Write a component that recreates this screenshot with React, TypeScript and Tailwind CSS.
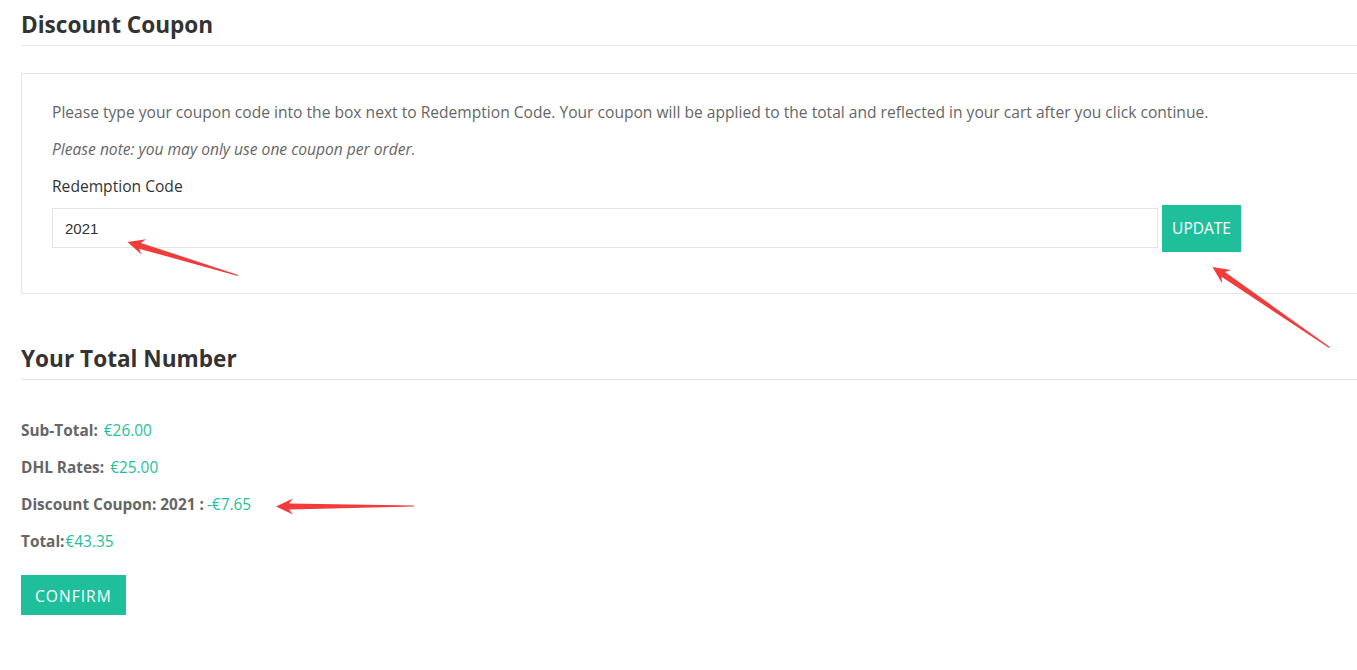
import React from "react";

type Pt = [number, number];

function arrowPoints(tip: Pt, tail: Pt) {
  const dx = tail[0] - tip[0];
  const dy = tail[1] - tip[1];
  const len = Math.hypot(dx, dy);
  const ux = dx / len;
  const uy = dy / len;
  const nx = -uy;
  const ny = ux;
  const h = 17;
  const w = 8;
  const s = 3;
  const p = (a: number, b: number): string => `${tip[0] + ux * a + nx * b},${tip[1] + uy * a + ny * b}`;
  return [
    p(0, 0),
    p(h, w),
    p(h - 4, s),
    p(len, 0.6),
    p(len, -0.6),
    p(h - 4, -s),
    p(h, -w),
  ].join(" ");
}

const arrows: { tip: Pt; tail: Pt }[] = [
  { tip: [127.5, 242], tail: [238, 275.5] },
  { tip: [1212.5, 267], tail: [1329.5, 347.5] },
  { tip: [276, 506.5], tail: [414, 506] },
];

const totals = [
  { label: "Sub-Total:", value: "€26.00", gap: "ml-[6px]" },
  { label: "DHL Rates:", value: "€25.00", gap: "ml-[6px]" },
  { label: "Discount Coupon: 2021 :", value: "-€7.65", gap: "ml-[3px]" },
  { label: "Total:", value: "€43.35", gap: "ml-[1px]" },
];

export default function App() {
  return (
    <div className="relative w-full h-[670px] overflow-hidden bg-white text-[#666] [font-family:'Open_Sans',sans-serif]">
      <div className="w-[1400px] pl-[21px]">
        <h2 className="mt-[10px] pb-[5px] border-b border-[#e5e5e5] text-[22.6px] leading-[30px] font-bold text-[#333]">
          Discount Coupon
        </h2>

        <div className="mt-[27px] border border-[#e5e5e5] pl-[30px] pt-[27px] pb-[41px]">
          <p className="text-[15.6px] leading-[22px]">
            Please type your coupon code into the box next to Redemption Code. Your coupon will be applied to the total and reflected in your cart after you click continue.
          </p>
          <p className="mt-[15px] text-[15.6px] leading-[22px] italic">
            Please note: you may only use one coupon per order.
          </p>
          <label className="block mt-[15px] text-[15.6px] leading-[22px] text-[#333]">Redemption Code</label>
          <div className="mt-[8px] flex items-start gap-[4px]">
            <input
              defaultValue="2021"
              className="mt-[3px] w-[1106px] h-[40px] border border-[#e5e5e5] px-[12px] text-[15px] text-[#333] outline-none [font-family:'Liberation_Sans',Arial,sans-serif]"
            />
            <button className="w-[79px] h-[47px] pt-[1px] bg-[#1fbf9c] text-white text-[15.5px] uppercase">Update</button>
          </div>
        </div>

        <h2 className="mt-[50px] pb-[5px] border-b border-[#e5e5e5] text-[22.6px] leading-[30px] font-bold text-[#333]">
          Your Total Number
        </h2>

        <div className="mt-[40px] flex flex-col gap-[15px]">
          {totals.map((t) => (
            <div key={t.label} className="flex text-[15.4px] leading-[22px]">
              <span className="font-bold">{t.label}</span>
              <span className={`text-[#1fbf9c] ${t.gap}`}>{t.value}</span>
            </div>
          ))}
        </div>

        <button className="mt-[22px] h-[40px] px-[14px] pt-[3px] bg-[#1fbf9c] text-white text-[15.6px] uppercase tracking-[1px]">
          Confirm
        </button>
      </div>

      <svg className="absolute inset-0 pointer-events-none" width="1357" height="670">
        {arrows.map((a, i) => (
          <polygon key={i} points={arrowPoints(a.tip, a.tail)} fill="#f23c3c" />
        ))}
      </svg>
    </div>
  );
}
